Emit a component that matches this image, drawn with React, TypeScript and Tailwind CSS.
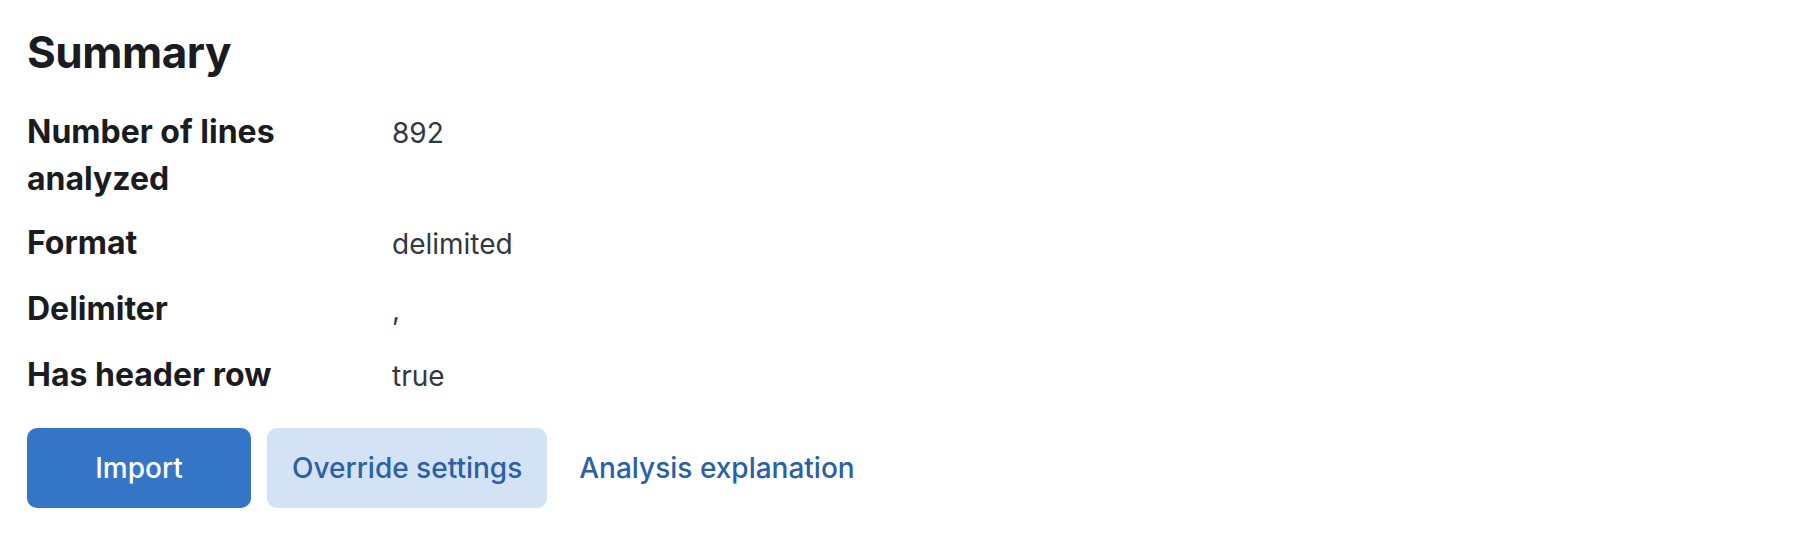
const rows: { label: string; value: string }[] = [
  { label: 'Number of lines analyzed', value: '892' },
  { label: 'Format', value: 'delimited' },
  { label: 'Delimiter', value: ',' },
  { label: 'Has header row', value: 'true' },
];

export default function App() {
  return (
    <div
      className="min-h-screen bg-white pl-[27px] pt-[26px]"
      style={{ fontFamily: 'Inter, "Noto Sans", sans-serif' }}
    >
      <h2 className="text-[44px] leading-[52px] font-bold tracking-[-0.01em] text-[#1a1c21]">
        Summary
      </h2>

      {/* description list */}
      <dl className="mt-[30px] grid grid-cols-[340px_1fr] items-baseline gap-x-[25px] gap-y-[17px] leading-[47px]">
        {rows.map((r) => (
          <div key={r.label} className="contents">
            <dt className="text-[32px] font-bold text-[#1a1c21]">{r.label}</dt>
            <dd className="text-[28px] text-[#343741]">{r.value}</dd>
          </div>
        ))}
      </dl>

      <div className="mt-[28px] flex items-center gap-4">
        <button className="h-[80px] w-[224px] rounded-[10px] bg-[#3575c8] text-[28px] font-medium text-white">
          Import
        </button>
        <button className="h-[80px] rounded-[10px] bg-[#d3e3f5] px-[25px] text-[28px] font-medium text-[#2b5fa6]">
          Override settings
        </button>
        <button className="h-[80px] px-[16px] text-[28px] font-medium text-[#2b5fa6]">
          Analysis explanation
        </button>
      </div>
    </div>
  );
}
